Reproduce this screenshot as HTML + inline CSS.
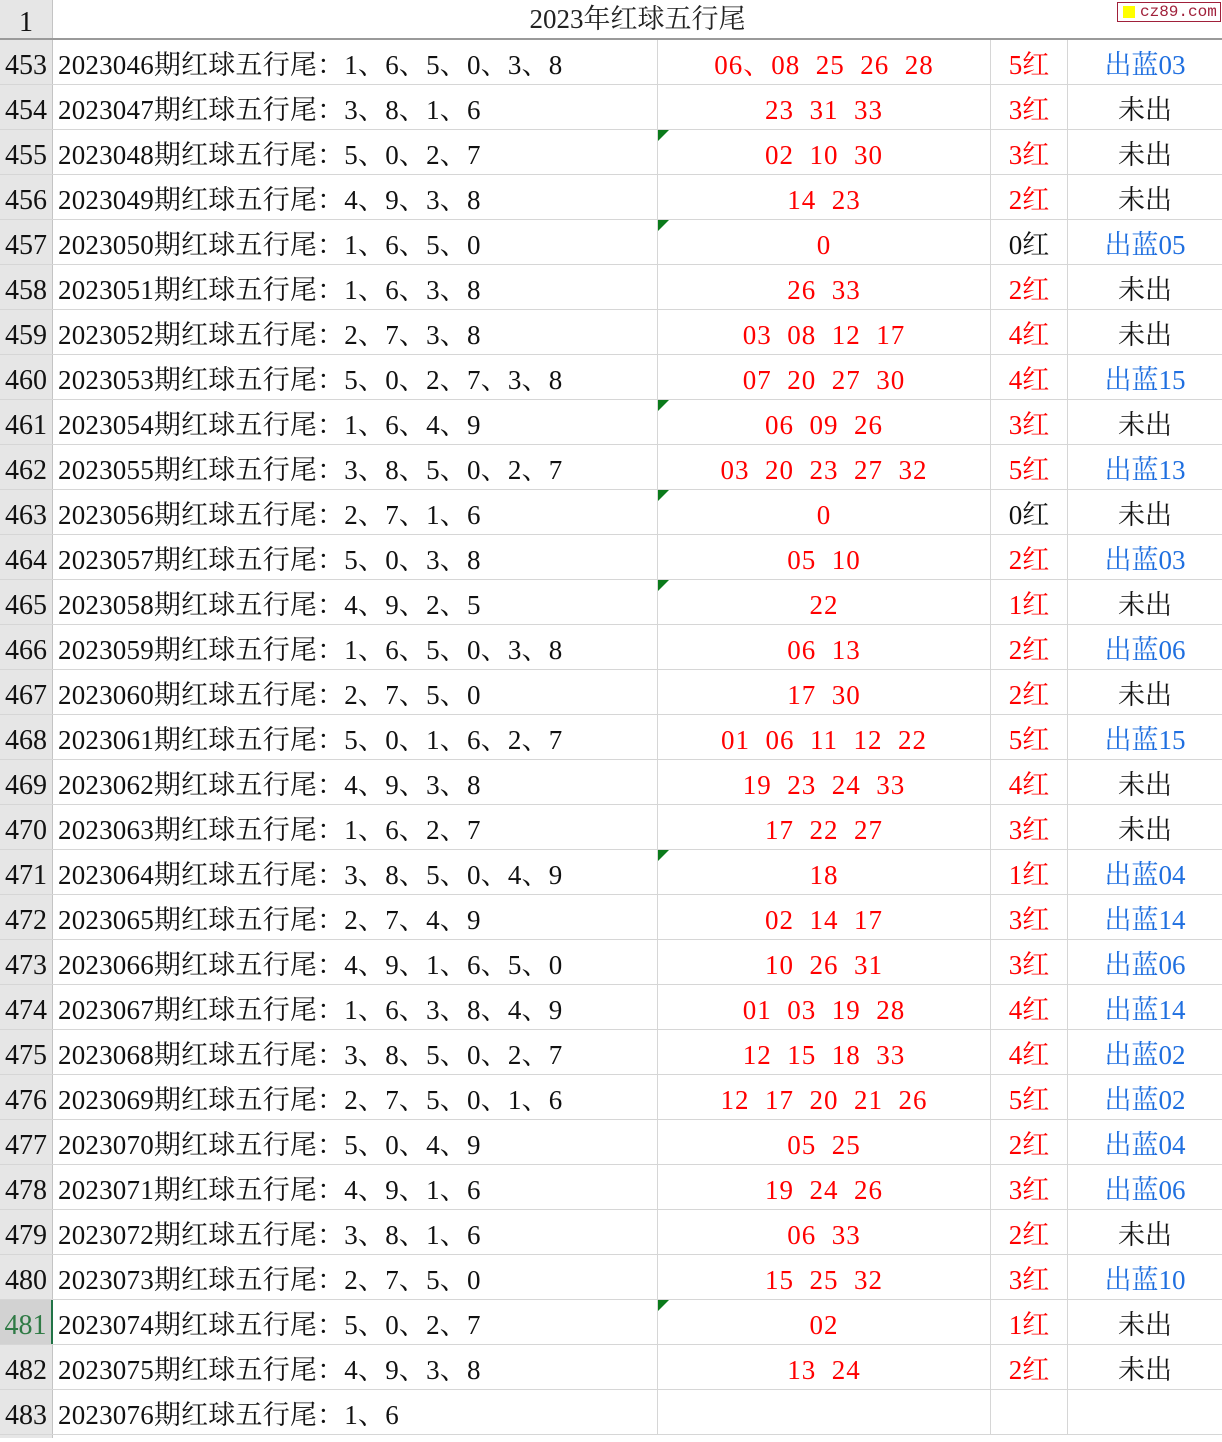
<!DOCTYPE html>
<html><head><meta charset="utf-8">
<style>
*{margin:0;padding:0;box-sizing:border-box}
body{width:1222px;height:1438px;background:#fff;position:relative;overflow:hidden;font-family:"Liberation Serif","Noto Serif CJK SC","Noto Sans CJK SC",serif;font-size:27px;color:#111}
.hdr{position:absolute;left:0;top:0;width:1222px;height:40px;border-bottom:2px solid #9a9a9a}
.rn{position:absolute;left:0;width:53px;background:#e6e6e6;border-right:1px solid #c4c4c4;text-align:center;font-size:28px}
.title{position:absolute;left:53px;width:1169px;top:0;height:38px;line-height:38px;text-align:center;font-size:27px;color:#222}
.logo{position:absolute;left:1117px;top:2px;width:104px;height:20px;border:1px solid #a0203a;color:#a0203a;font-size:16px;line-height:18px;padding-left:22px;font-family:"Liberation Mono",monospace;white-space:nowrap;overflow:hidden}
.logo i{position:absolute;left:5px;top:3px;width:12px;height:12px;background:#ffff00}
.row{position:absolute;left:0;width:1222px;height:45px;border-bottom:1px solid #d6d6d6}
.row div{position:absolute;top:0;height:44px;line-height:50px;white-space:pre}
.row div.c0{left:0;width:53px;background:#e6e6e6;border-right:1px solid #c4c4c4;text-align:center;font-size:28px;line-height:52px}
.c1{left:58px;width:599px;letter-spacing:0.2px}
.c2{left:657px;width:333px;text-align:center;color:#ff0000;border-left:1px solid #d6d6d6;letter-spacing:1px}
.c3{left:990px;width:77px;text-align:center;color:#ff0000;border-left:1px solid #d6d6d6}
.c4{left:1067px;width:155px;text-align:center;border-left:1px solid #d6d6d6}
.b{color:#1f6fe0}.k{color:#111!important}
.tri{position:absolute;left:658px;top:0;width:0;height:0;border-top:11px solid #0a7a1a;border-right:11px solid transparent}
.row div.sel{background:#d2d2d2;color:#2f7a45;border-right:2px solid #217346}
</style></head><body>
<div class="hdr">
<div class="rn" style="top:0;height:38px;line-height:46px">1</div>
<div class="title">2023年红球五行尾</div>
<div class="logo"><i></i>cz89.com</div>
</div>
<div class="row" style="top:40px"><div class="c0">453</div><div class="c1">2023046期红球五行尾：1、6、5、0、3、8</div><div class="c2">06、08  25  26  28</div><div class="c3">5红</div><div class="c4 b">出蓝03</div></div>
<div class="row" style="top:85px"><div class="c0">454</div><div class="c1">2023047期红球五行尾：3、8、1、6</div><div class="c2">23  31  33</div><div class="c3">3红</div><div class="c4">未出</div></div>
<div class="row" style="top:130px"><div class="c0">455</div><div class="c1">2023048期红球五行尾：5、0、2、7</div><div class="c2">02  10  30</div><div class="c3">3红</div><div class="c4">未出</div><span class="tri"></span></div>
<div class="row" style="top:175px"><div class="c0">456</div><div class="c1">2023049期红球五行尾：4、9、3、8</div><div class="c2">14  23</div><div class="c3">2红</div><div class="c4">未出</div></div>
<div class="row" style="top:220px"><div class="c0">457</div><div class="c1">2023050期红球五行尾：1、6、5、0</div><div class="c2">0</div><div class="c3 k">0红</div><div class="c4 b">出蓝05</div><span class="tri"></span></div>
<div class="row" style="top:265px"><div class="c0">458</div><div class="c1">2023051期红球五行尾：1、6、3、8</div><div class="c2">26  33</div><div class="c3">2红</div><div class="c4">未出</div></div>
<div class="row" style="top:310px"><div class="c0">459</div><div class="c1">2023052期红球五行尾：2、7、3、8</div><div class="c2">03  08  12  17</div><div class="c3">4红</div><div class="c4">未出</div></div>
<div class="row" style="top:355px"><div class="c0">460</div><div class="c1">2023053期红球五行尾：5、0、2、7、3、8</div><div class="c2">07  20  27  30</div><div class="c3">4红</div><div class="c4 b">出蓝15</div></div>
<div class="row" style="top:400px"><div class="c0">461</div><div class="c1">2023054期红球五行尾：1、6、4、9</div><div class="c2">06  09  26</div><div class="c3">3红</div><div class="c4">未出</div><span class="tri"></span></div>
<div class="row" style="top:445px"><div class="c0">462</div><div class="c1">2023055期红球五行尾：3、8、5、0、2、7</div><div class="c2">03  20  23  27  32</div><div class="c3">5红</div><div class="c4 b">出蓝13</div></div>
<div class="row" style="top:490px"><div class="c0">463</div><div class="c1">2023056期红球五行尾：2、7、1、6</div><div class="c2">0</div><div class="c3 k">0红</div><div class="c4">未出</div><span class="tri"></span></div>
<div class="row" style="top:535px"><div class="c0">464</div><div class="c1">2023057期红球五行尾：5、0、3、8</div><div class="c2">05  10</div><div class="c3">2红</div><div class="c4 b">出蓝03</div></div>
<div class="row" style="top:580px"><div class="c0">465</div><div class="c1">2023058期红球五行尾：4、9、2、5</div><div class="c2">22</div><div class="c3">1红</div><div class="c4">未出</div><span class="tri"></span></div>
<div class="row" style="top:625px"><div class="c0">466</div><div class="c1">2023059期红球五行尾：1、6、5、0、3、8</div><div class="c2">06  13</div><div class="c3">2红</div><div class="c4 b">出蓝06</div></div>
<div class="row" style="top:670px"><div class="c0">467</div><div class="c1">2023060期红球五行尾：2、7、5、0</div><div class="c2">17  30</div><div class="c3">2红</div><div class="c4">未出</div></div>
<div class="row" style="top:715px"><div class="c0">468</div><div class="c1">2023061期红球五行尾：5、0、1、6、2、7</div><div class="c2">01  06  11  12  22</div><div class="c3">5红</div><div class="c4 b">出蓝15</div></div>
<div class="row" style="top:760px"><div class="c0">469</div><div class="c1">2023062期红球五行尾：4、9、3、8</div><div class="c2">19  23  24  33</div><div class="c3">4红</div><div class="c4">未出</div></div>
<div class="row" style="top:805px"><div class="c0">470</div><div class="c1">2023063期红球五行尾：1、6、2、7</div><div class="c2">17  22  27</div><div class="c3">3红</div><div class="c4">未出</div></div>
<div class="row" style="top:850px"><div class="c0">471</div><div class="c1">2023064期红球五行尾：3、8、5、0、4、9</div><div class="c2">18</div><div class="c3">1红</div><div class="c4 b">出蓝04</div><span class="tri"></span></div>
<div class="row" style="top:895px"><div class="c0">472</div><div class="c1">2023065期红球五行尾：2、7、4、9</div><div class="c2">02  14  17</div><div class="c3">3红</div><div class="c4 b">出蓝14</div></div>
<div class="row" style="top:940px"><div class="c0">473</div><div class="c1">2023066期红球五行尾：4、9、1、6、5、0</div><div class="c2">10  26  31</div><div class="c3">3红</div><div class="c4 b">出蓝06</div></div>
<div class="row" style="top:985px"><div class="c0">474</div><div class="c1">2023067期红球五行尾：1、6、3、8、4、9</div><div class="c2">01  03  19  28</div><div class="c3">4红</div><div class="c4 b">出蓝14</div></div>
<div class="row" style="top:1030px"><div class="c0">475</div><div class="c1">2023068期红球五行尾：3、8、5、0、2、7</div><div class="c2">12  15  18  33</div><div class="c3">4红</div><div class="c4 b">出蓝02</div></div>
<div class="row" style="top:1075px"><div class="c0">476</div><div class="c1">2023069期红球五行尾：2、7、5、0、1、6</div><div class="c2">12  17  20  21  26</div><div class="c3">5红</div><div class="c4 b">出蓝02</div></div>
<div class="row" style="top:1120px"><div class="c0">477</div><div class="c1">2023070期红球五行尾：5、0、4、9</div><div class="c2">05  25</div><div class="c3">2红</div><div class="c4 b">出蓝04</div></div>
<div class="row" style="top:1165px"><div class="c0">478</div><div class="c1">2023071期红球五行尾：4、9、1、6</div><div class="c2">19  24  26</div><div class="c3">3红</div><div class="c4 b">出蓝06</div></div>
<div class="row" style="top:1210px"><div class="c0">479</div><div class="c1">2023072期红球五行尾：3、8、1、6</div><div class="c2">06  33</div><div class="c3">2红</div><div class="c4">未出</div></div>
<div class="row" style="top:1255px"><div class="c0">480</div><div class="c1">2023073期红球五行尾：2、7、5、0</div><div class="c2">15  25  32</div><div class="c3">3红</div><div class="c4 b">出蓝10</div></div>
<div class="row" style="top:1300px"><div class="c0 sel">481</div><div class="c1">2023074期红球五行尾：5、0、2、7</div><div class="c2">02</div><div class="c3">1红</div><div class="c4">未出</div><span class="tri"></span></div>
<div class="row" style="top:1345px"><div class="c0">482</div><div class="c1">2023075期红球五行尾：4、9、3、8</div><div class="c2">13  24</div><div class="c3">2红</div><div class="c4">未出</div></div>
<div class="row" style="top:1390px"><div class="c0">483</div><div class="c1">2023076期红球五行尾：1、6</div><div class="c2"></div><div class="c3"></div><div class="c4"></div></div>
<div style="position:absolute;left:0;top:1435px;width:53px;height:3px;background:#e6e6e6;border-right:1px solid #c4c4c4"></div>
</body></html>
